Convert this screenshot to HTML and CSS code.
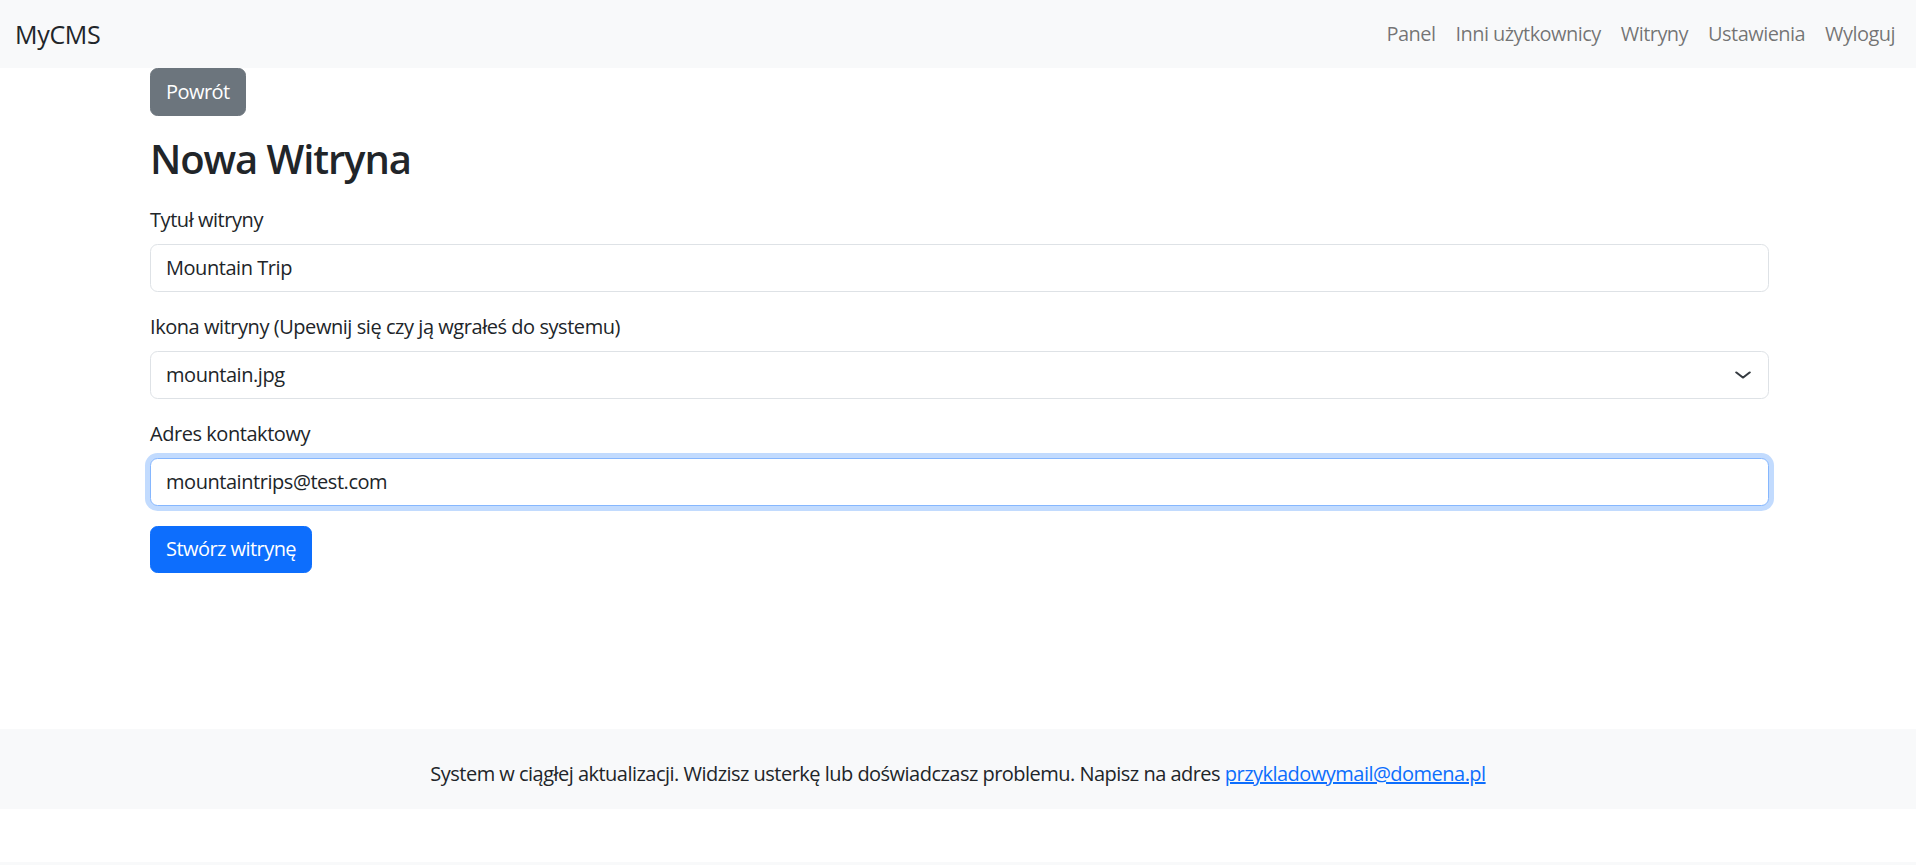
FILE: index.html
```html
<!DOCTYPE html>
<html lang="pl">
<head>
<meta charset="utf-8">
<title>MyCMS - Nowa Witryna</title>
<link rel="stylesheet" href="styles.css">
</head>
<body>
<nav class="navbar">
  <a class="brand" href="#">MyCMS</a>
  <ul class="nav-links">
    <li><a href="#">Panel</a></li>
    <li><a href="#">Inni użytkownicy</a></li>
    <li><a href="#">Witryny</a></li>
    <li><a href="#">Ustawienia</a></li>
    <li><a href="#">Wyloguj</a></li>
  </ul>
</nav>
<main class="container">
  <a class="btn btn-secondary" href="#">Powrót</a>
  <h2 class="title">Nowa Witryna</h2>
  <form class="form">
    <div class="field">
      <label class="label" for="title">Tytuł witryny</label>
      <input class="control" id="title" type="text" value="Mountain Trip">
    </div>
    <div class="field">
      <label class="label" for="icon">Ikona witryny (Upewnij się czy ją wgrałeś do systemu)</label>
      <div class="control select" id="icon">
        <span>mountain.jpg</span>
        <svg class="chevron" viewBox="0 0 16 16" width="18" height="14" preserveAspectRatio="none"><path d="m2 5 6 6 6-6" fill="none" stroke="#343a40" stroke-width="2" stroke-linecap="round" stroke-linejoin="round"/></svg>
      </div>
    </div>
    <div class="field">
      <label class="label" for="mail">Adres kontaktowy</label>
      <input class="control focused" id="mail" type="email" value="mountaintrips@test.com">
    </div>
    <button class="btn btn-primary" type="button">Stwórz witrynę</button>
  </form>
</main>
<footer class="footer">
  <p>System w ciągłej aktualizacji. Widzisz usterkę lub doświadczasz problemu. Napisz na adres <a href="#">przykladowymail@domena.pl</a></p>
</footer>
<div class="bottom-strip"></div>
</body>
</html>
```
FILE: styles.css
```css
* { box-sizing: border-box; }
html, body { margin: 0; padding: 0; }
body {
  font-family: "Open Sans", "Noto Sans", "DejaVu Sans", sans-serif;
  font-size: 20px;
  line-height: 30px;
  color: #212529;
  background: #fff;
}
.navbar {
  height: 68px;
  background: #f8f9fa;
  display: flex;
  align-items: center;
  justify-content: space-between;
  padding: 0 11px 0 15px;
}
.brand {
  font-size: 25px;
  line-height: 38px;
  color: #212529;
  text-decoration: none;
  letter-spacing: -0.3px;
}
.nav-links {
  display: flex;
  list-style: none;
  margin: 0;
  padding: 0;
}
.nav-links a {
  display: block;
  padding: 0 10px;
  color: rgba(0, 0, 0, 0.55);
  text-decoration: none;
  letter-spacing: -0.55px;
}
.container {
  width: 1619px;
  margin: 0 0 0 150px;
}
.btn {
  display: inline-block;
  height: 47.5px;
  padding: 7.5px 15px;
  font-family: inherit;
  font-size: 20px;
  line-height: 30px;
  border: 1.25px solid transparent;
  border-radius: 7.5px;
  color: #fff;
  text-decoration: none;
  letter-spacing: -0.55px;
}
.btn-secondary { background: #6c757d; border-color: #6c757d; }
.btn-primary { background: #0d6efd; border-color: #0d6efd; cursor: pointer; }
.title {
  font-size: 40px;
  font-weight: 600;
  line-height: 48px;
  margin: 19px 0 22px;
  letter-spacing: -1.1px;
}
.form { margin: 0; }
.field { margin-bottom: 20px; }
.label {
  display: block;
  margin-bottom: 9.5px;
  letter-spacing: -0.45px;
}
.control {
  display: block;
  width: 100%;
  height: 47.5px;
  padding: 7.5px 15px;
  font-family: inherit;
  font-size: 20px;
  line-height: 30px;
  color: #212529;
  background: #fff;
  border: 1.25px solid #dee2e6;
  border-radius: 7.5px;
  outline: none;
  letter-spacing: -0.45px;
}
.select {
  display: flex;
  align-items: center;
  justify-content: space-between;
  padding-right: 16px;
}
.chevron { display: block; }
.focused {
  border-color: #86b7fe;
  box-shadow: 0 0 0 5px rgba(13, 110, 253, 0.25);
}
.footer {
  margin-top: 156px;
  height: 80px;
  background: #f8f9fa;
  padding-top: 30px;
  text-align: center;
}
.footer p {
  margin: 0;
  letter-spacing: -0.52px;
}
.footer a { color: #0d6efd; }
.bottom-strip {
  margin-top: 53px;
  height: 3px;
  background: #f8f9fa;
}
```
